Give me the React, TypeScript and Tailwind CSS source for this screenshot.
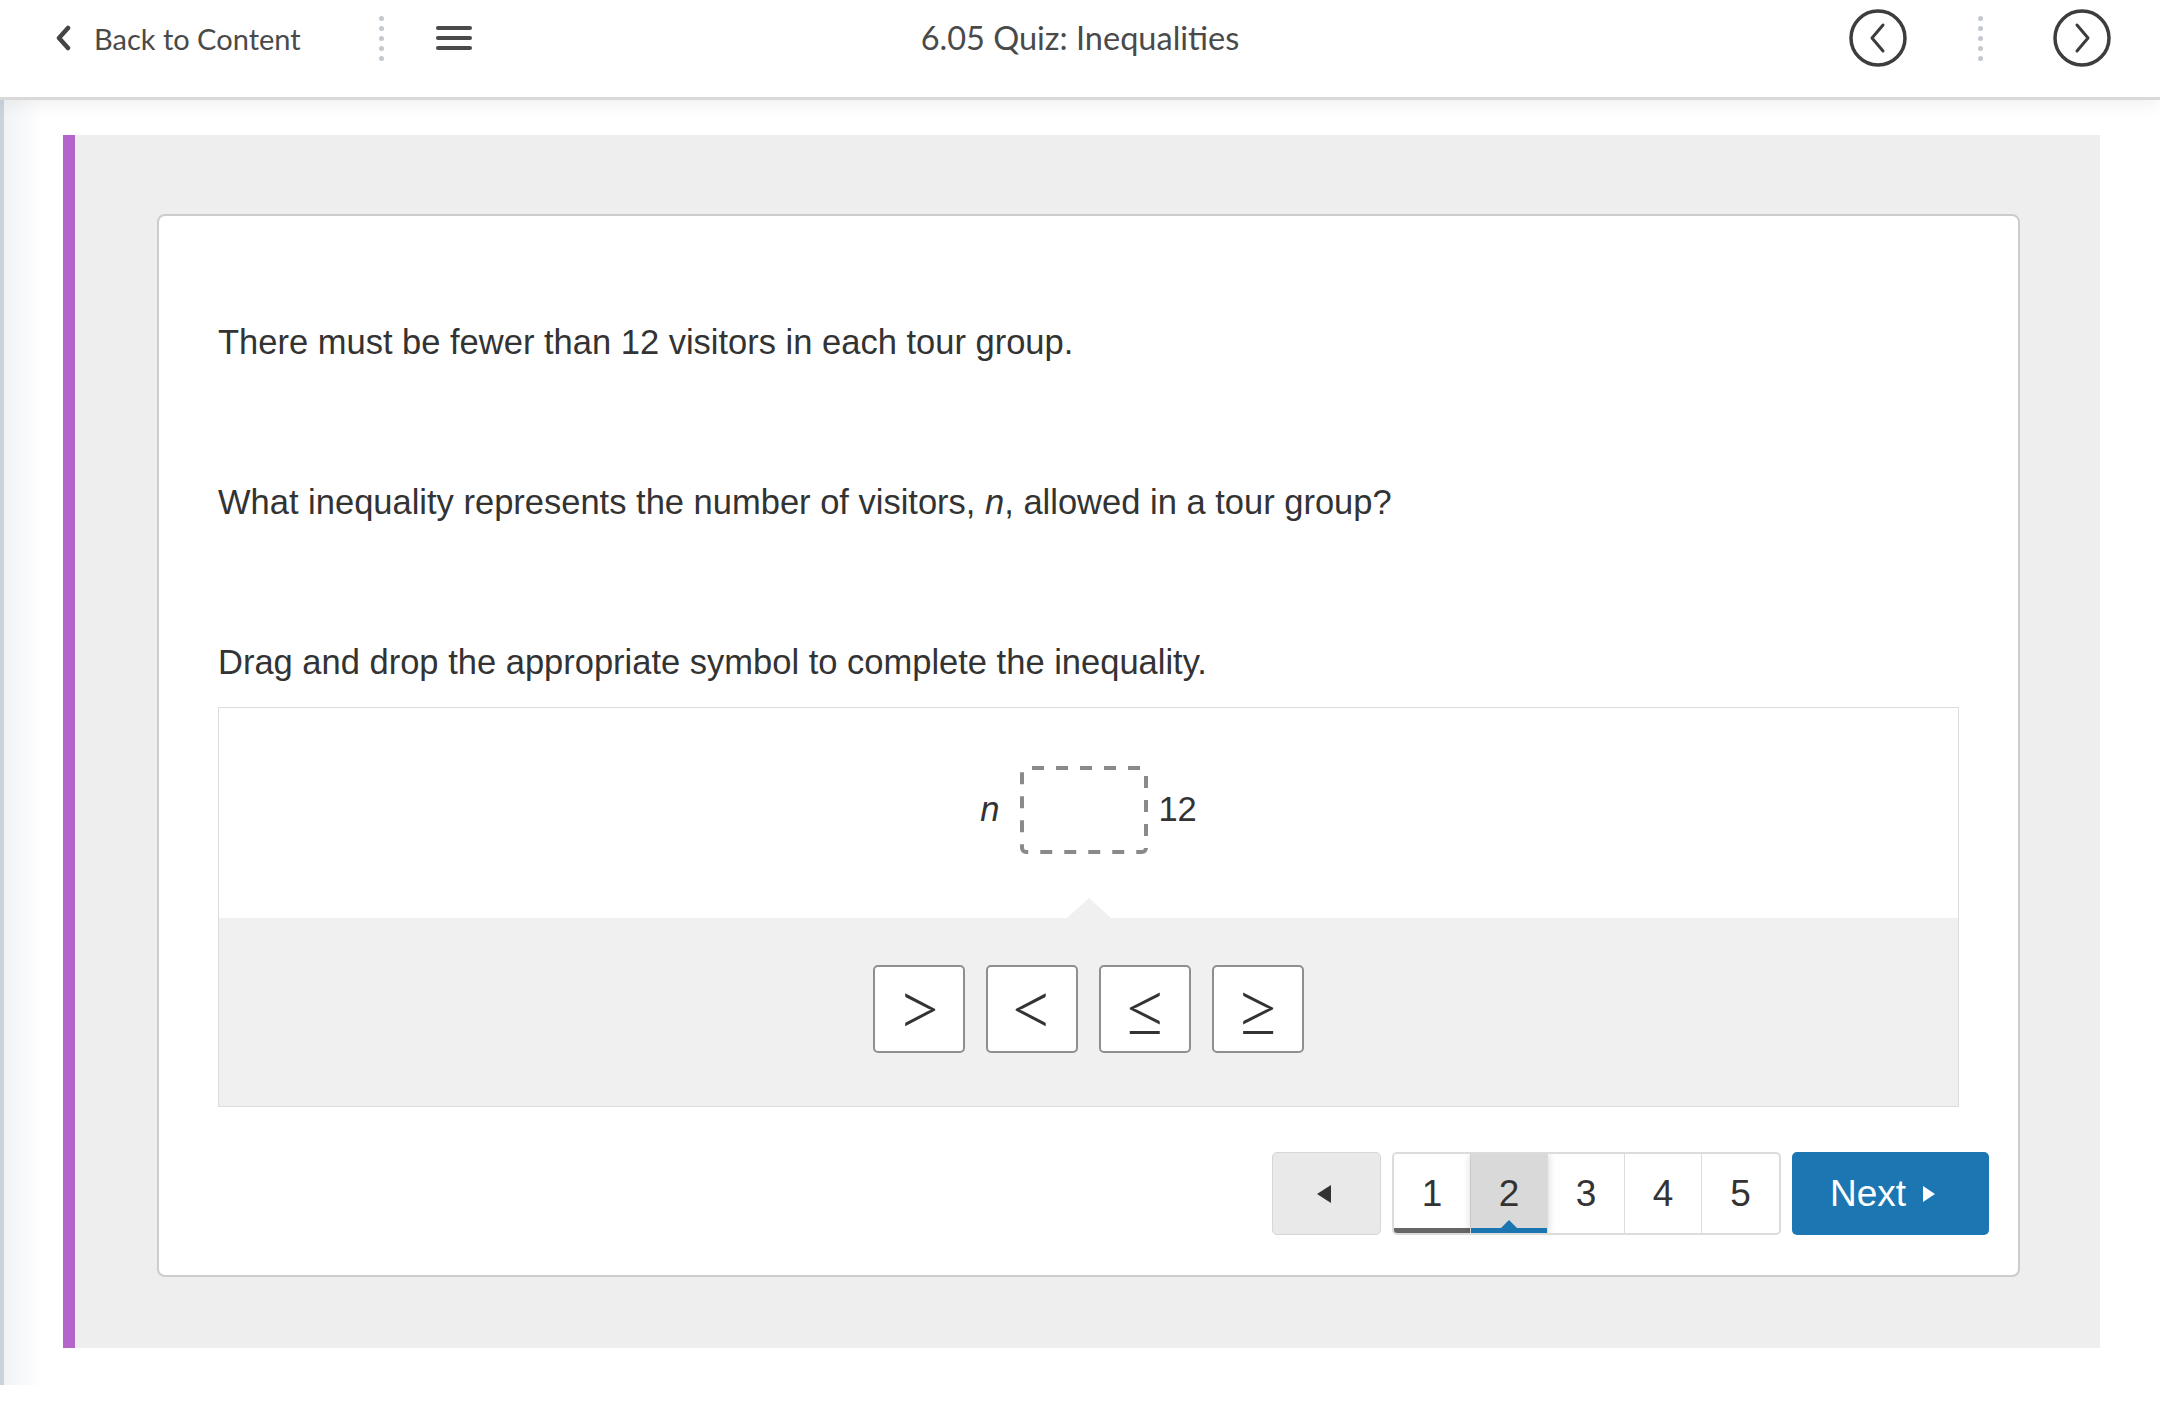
import React from "react";

const symbols = [">", "<", "≤", "≥"];
const pages = [1, 2, 3, 4, 5];

function Dots() {
  return (
    <div className="flex flex-col gap-[5px]">
      {[0, 1, 2, 3, 4].map((i) => (
        <span key={i} className="w-[5px] h-[5px] rounded-full bg-[#c3c9ce]" />
      ))}
    </div>
  );
}

function CircleArrow({ dir }: { dir: "left" | "right" }) {
  return (
    <svg width="58" height="58" viewBox="0 0 58 58" fill="none">
      <circle cx="29" cy="29" r="27" stroke="#3d3d3d" strokeWidth="3.5" />
      <polyline
        points={dir === "left" ? "34,16 23,29 34,42" : "24,16 35,29 24,42"}
        stroke="#3d3d3d"
        strokeWidth="3"
        strokeLinecap="round"
        strokeLinejoin="round"
      />
    </svg>
  );
}

function Header() {
  return (
    <header className="relative z-10 h-[100px] bg-white border-b-[3px] border-[#d9d9d9] shadow-[0_6px_14px_rgba(0,0,0,0.05)] font-['Lato',sans-serif] text-[#4a4a4a]">
      <div className="h-[76px] grid grid-cols-[1fr_auto_1fr] items-center">
        <div className="flex items-center pl-[55px]">
          <svg width="17" height="26" viewBox="0 0 17 26" fill="none">
            <polyline points="13,3 4,13 13,23" stroke="#454545" strokeWidth="4.5" strokeLinecap="round" strokeLinejoin="round" />
          </svg>
          <span className="ml-[22px] w-[285px] text-[29px] leading-none">Back to Content</span>
          <Dots />
          <div className="ml-[52px] flex flex-col gap-[6px]">
            <span className="block w-[36px] h-[4px] rounded-sm bg-[#4a4a4a]" />
            <span className="block w-[36px] h-[4px] rounded-sm bg-[#4a4a4a]" />
            <span className="block w-[36px] h-[4px] rounded-sm bg-[#4a4a4a]" />
          </div>
        </div>
        <h1 className="text-[32.5px] leading-none">6.05 Quiz: Inequalities</h1>
        <div className="flex items-center justify-end pr-[49px]">
          <CircleArrow dir="left" />
          <div className="ml-[71px] mr-[70px]">
            <Dots />
          </div>
          <CircleArrow dir="right" />
        </div>
      </div>
    </header>
  );
}

function DropArea() {
  return (
    <div className="mt-[21px] border border-[#dcdcdc]">
      <div className="h-[210px] pb-[6px] flex items-center justify-center bg-white text-[34.5px] text-[#333]">
        <span className="italic mr-[21px]">n</span>
        <svg width="128" height="88" viewBox="0 0 128 88" fill="none">
          <rect x="2" y="2" width="124" height="84" rx="4" stroke="#8a8a8a" strokeWidth="4" strokeDasharray="12 12" strokeDashoffset="-6" />
        </svg>
        <span className="ml-[10px]">12</span>
      </div>
      <div className="relative h-[188px] pb-[6px] bg-[#f0f0f0] flex items-center justify-center gap-[21px]">
        <span className="absolute left-1/2 -translate-x-1/2 -top-[20px] w-0 h-0 border-l-[22px] border-r-[22px] border-b-[20px] border-l-transparent border-r-transparent border-b-[#f0f0f0]" />
        {symbols.map((s) => (
          <div
            key={s}
            className="w-[92px] h-[88px] bg-white border-2 border-[#8f8f8f] rounded-[5px] flex items-center justify-center font-['Lato',sans-serif] font-light text-[80px] leading-none text-[#333] pb-[6px]"
          >
            {s}
          </div>
        ))}
      </div>
    </div>
  );
}

function Pagination() {
  return (
    <div className="mt-[45px] -mr-[30px] flex justify-end items-center gap-[11px] h-[83px]">
      <button className="w-[109px] h-[83px] bg-[#e9e9e9] border border-[#d6d6d6] rounded-[5px] flex items-center justify-center pr-[6px]">
        <span className="w-0 h-0 border-t-[9px] border-b-[9px] border-r-[14px] border-t-transparent border-b-transparent border-r-[#333]" />
      </button>
      <div className="relative h-[83px] flex border-2 border-[#dcdcdc] rounded-[5px] bg-white overflow-hidden">
        {pages.map((p, i) => (
          <div
            key={p}
            className={
              "relative w-[77px] h-full flex items-center justify-center text-[37px] text-[#333] " +
              (i < 4 ? "border-r border-[#dcdcdc] " : "") +
              (p === 2 ? "bg-[#d9d9d9] shadow-[0_0_8px_rgba(0,0,0,0.18)] z-10" : "")
            }
          >
            {p}
            {p === 1 && <span className="absolute left-0 right-0 bottom-0 h-[5px] bg-[#666]" />}
            {p === 2 && (
              <>
                <span className="absolute left-0 right-0 bottom-0 h-[5px] bg-[#1a75b0]" />
                <span className="absolute left-1/2 -translate-x-1/2 bottom-[5px] w-0 h-0 border-l-[8px] border-r-[8px] border-b-[8px] border-l-transparent border-r-transparent border-b-[#1a75b0]" />
              </>
            )}
          </div>
        ))}
      </div>
      <button className="w-[197px] h-[83px] bg-[#1b76b2] rounded-[5px] flex items-center justify-start pl-[38px] gap-[17px] text-white text-[37px]">
        <span>Next</span>
        <span className="w-0 h-0 border-t-[8px] border-b-[8px] border-l-[12px] border-t-transparent border-b-transparent border-l-white" />
      </button>
    </div>
  );
}

export default function App() {
  return (
    <div className="w-[2160px] h-[1408px] bg-white overflow-hidden font-['Liberation_Sans',Arial,sans-serif]">
      <Header />
      <div className="flex">
        <div className="w-[4px] h-[1285px] bg-[#c9d3dc]" />
        <div className="flex-1 pl-[59px] pt-[35px] bg-[linear-gradient(to_right,#f1f3f5,#ffffff_40px)]">
          <div className="w-[2037px] h-[1213px] bg-[#eeeeee] border-l-[12px] border-[#b565c9] pl-[82px] pt-[79px] pr-[80px] pb-[71px] flex">
            <div className="flex-1 bg-white border-2 border-[#cccccc] rounded-lg px-[59px] pt-[102px] text-[#333]">
              <p className="text-[34.5px] leading-[48px]">There must be fewer than 12 visitors in each tour group.</p>
              <p className="mt-[112px] text-[34.5px] leading-[48px]">
                What inequality represents the number of visitors, <i>n</i>, allowed in a tour group?
              </p>
              <p className="mt-[112px] text-[34.5px] leading-[48px]">Drag and drop the appropriate symbol to complete the inequality.</p>
              <DropArea />
              <Pagination />
            </div>
          </div>
        </div>
      </div>
    </div>
  );
}
